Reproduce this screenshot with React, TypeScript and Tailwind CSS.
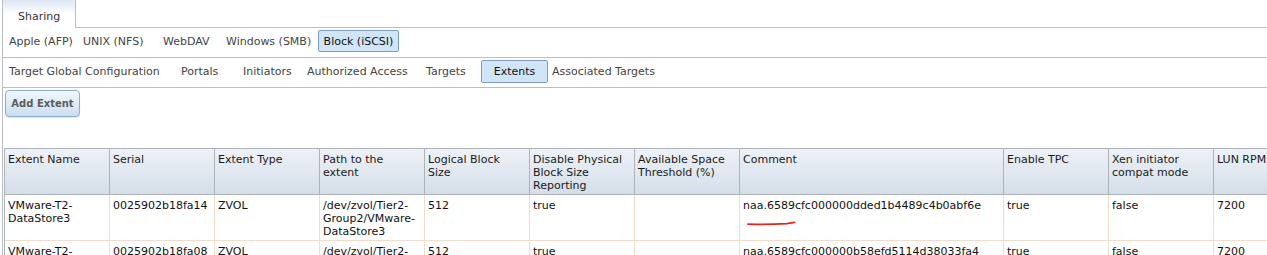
import React from 'react';

const sharingTabs = [
  { label: 'Apple (AFP)', w: 'w-[74px]' },
  { label: 'UNIX (NFS)', w: 'w-[80px]' },
  { label: 'WebDAV', w: 'w-[63px]' },
  { label: 'Windows (SMB)', w: 'w-[96px]' },
  { label: 'Block (iSCSI)', w: 'w-[81px]', active: true },
];

const iscsiTabs = [
  { label: 'Target Global Configuration', w: 'w-[172px]' },
  { label: 'Portals', w: 'w-[62px]' },
  { label: 'Initiators', w: 'w-[64px]' },
  { label: 'Authorized Access', w: 'w-[119px]' },
  { label: 'Targets', w: 'w-[59px]' },
  { label: 'Extents', w: 'w-[67px]', active: true },
  { label: 'Associated Targets', w: 'w-[130px]' },
];

const headers: string[][] = [
  ['Extent Name'],
  ['Serial'],
  ['Extent Type'],
  ['Path to the', 'extent'],
  ['Logical Block', 'Size'],
  ['Disable Physical', 'Block Size', 'Reporting'],
  ['Available Space', 'Threshold (%)'],
  ['Comment'],
  ['Enable TPC'],
  ['Xen initiator', 'compat mode'],
  ['LUN RPM'],
];

const rows: string[][][] = [
  [
    ['VMware-T2-', 'DataStore3'],
    ['0025902b18fa14'],
    ['ZVOL'],
    ['/dev/zvol/Tier2-', 'Group2/VMware-', 'DataStore3'],
    ['512'],
    ['true'],
    [],
    ['naa.6589cfc000000dded1b4489c4b0abf6e'],
    ['true'],
    ['false'],
    ['7200'],
  ],
  [
    ['VMware-T2-', 'DataStore4'],
    ['0025902b18fa08'],
    ['ZVOL'],
    ['/dev/zvol/Tier2-', 'Group2/VMware-', 'DataStore4'],
    ['512'],
    ['true'],
    [],
    ['naa.6589cfc000000b58efd5114d38033fa4'],
    ['true'],
    ['false'],
    ['7200'],
  ],
];

const gridCols =
  'grid grid-cols-[105px_105px_105px_105px_105px_105px_105px_264px_105px_105px_105px]';

export default function App() {
  return (
    <div
      className="w-[1267px] h-[255px] overflow-hidden bg-white text-[11px] leading-[13px]"
      style={{ fontFamily: '"DejaVu Sans", Verdana, sans-serif' }}
    >
      <div className="ml-[2px] h-full border-l border-[#b9bdc4]">
        {/* top tab */}
        <div className="flex h-[28px]">
          <div className="w-[73px] h-[28px] border-r border-[#b9bdc4] bg-gradient-to-b from-[#dbe6f3] via-white to-white pl-[15px] pt-[10px] text-[#333]">
            Sharing
          </div>
          <div className="flex-1 border-b border-[#b9bdc4]" />
        </div>

        {/* sharing types */}
        <div className="flex h-[30px] items-start border-b border-[#b9bdc4] pl-[2px] pt-[2px]">
          {sharingTabs.map((t) => (
            <div
              key={t.label}
              className={`${t.w} h-[22px] flex items-center whitespace-nowrap ${
                t.active
                  ? 'justify-center rounded-[2px] border border-[#7d9dc2] bg-[#d1e5f8] text-[#111]'
                  : 'pl-[4px] text-[#444]'
              }`}
            >
              {t.label}
            </div>
          ))}
        </div>

        {/* iscsi sections */}
        <div className="flex h-[30px] items-start border-b border-[#b9bdc4] pl-[2px] pt-[2px]">
          {iscsiTabs.map((t) => (
            <div
              key={t.label}
              className={`${t.w} h-[23px] flex items-center whitespace-nowrap ${
                t.active
                  ? 'justify-center rounded-[2px] border border-[#7d9dc2] bg-[#d1e5f8] text-[#111]'
                  : 'pl-[4px] text-[#444]'
              }`}
            >
              {t.label}
            </div>
          ))}
        </div>

        {/* toolbar */}
        <div className="h-[60px] pl-[2px] pt-[2px]">
          <button className="w-[75px] h-[27px] rounded-[4px] border border-[#8eaed0] bg-gradient-to-b from-[#f3f8fd] to-[#c9ddf1] text-[10px] font-bold text-[#5c5c5c] shadow-[0_1px_1px_rgba(0,0,0,0.12)]">
            Add Extent
          </button>
        </div>

        {/* extents table */}
        <div className="ml-[1px] w-max border-l border-t border-[#aeb3ba]">
          <div className={`${gridCols} bg-gradient-to-b from-[#eef2f8] to-[#d3dde8] text-[#1b1b1b]`}>
            {headers.map((h, i) => (
              <div
                key={i}
                className="h-[46px] border-r border-b border-[#aeb3ba] pl-[3px] pt-[4px] whitespace-nowrap overflow-hidden"
              >
                {h.map((line) => (
                  <div key={line}>{line}</div>
                ))}
              </div>
            ))}
          </div>
          {rows.map((row, r) => (
            <div key={r} className={`${gridCols} text-[#111]`}>
              {row.map((cell, i) => (
                <div
                  key={i}
                  className="relative h-[46px] border-r border-b border-[#f1dccd] pl-[3px] pt-[4px] whitespace-nowrap overflow-hidden"
                >
                  {cell.map((line) => (
                    <div key={line}>{line}</div>
                  ))}
                  {r === 0 && i === 7 && (
                    <svg
                      className="absolute left-[7px] top-[25px]"
                      width="50"
                      height="6"
                      viewBox="0 0 50 6"
                    >
                      <path
                        d="M1 4.2 C 14 4.6, 28 4.4, 40 3.6 C 44 3.2, 46 2.6, 47.5 2.4"
                        fill="none"
                        stroke="#e3241f"
                        strokeWidth="1.8"
                        strokeLinecap="round"
                      />
                    </svg>
                  )}
                </div>
              ))}
            </div>
          ))}
        </div>
      </div>
    </div>
  );
}
